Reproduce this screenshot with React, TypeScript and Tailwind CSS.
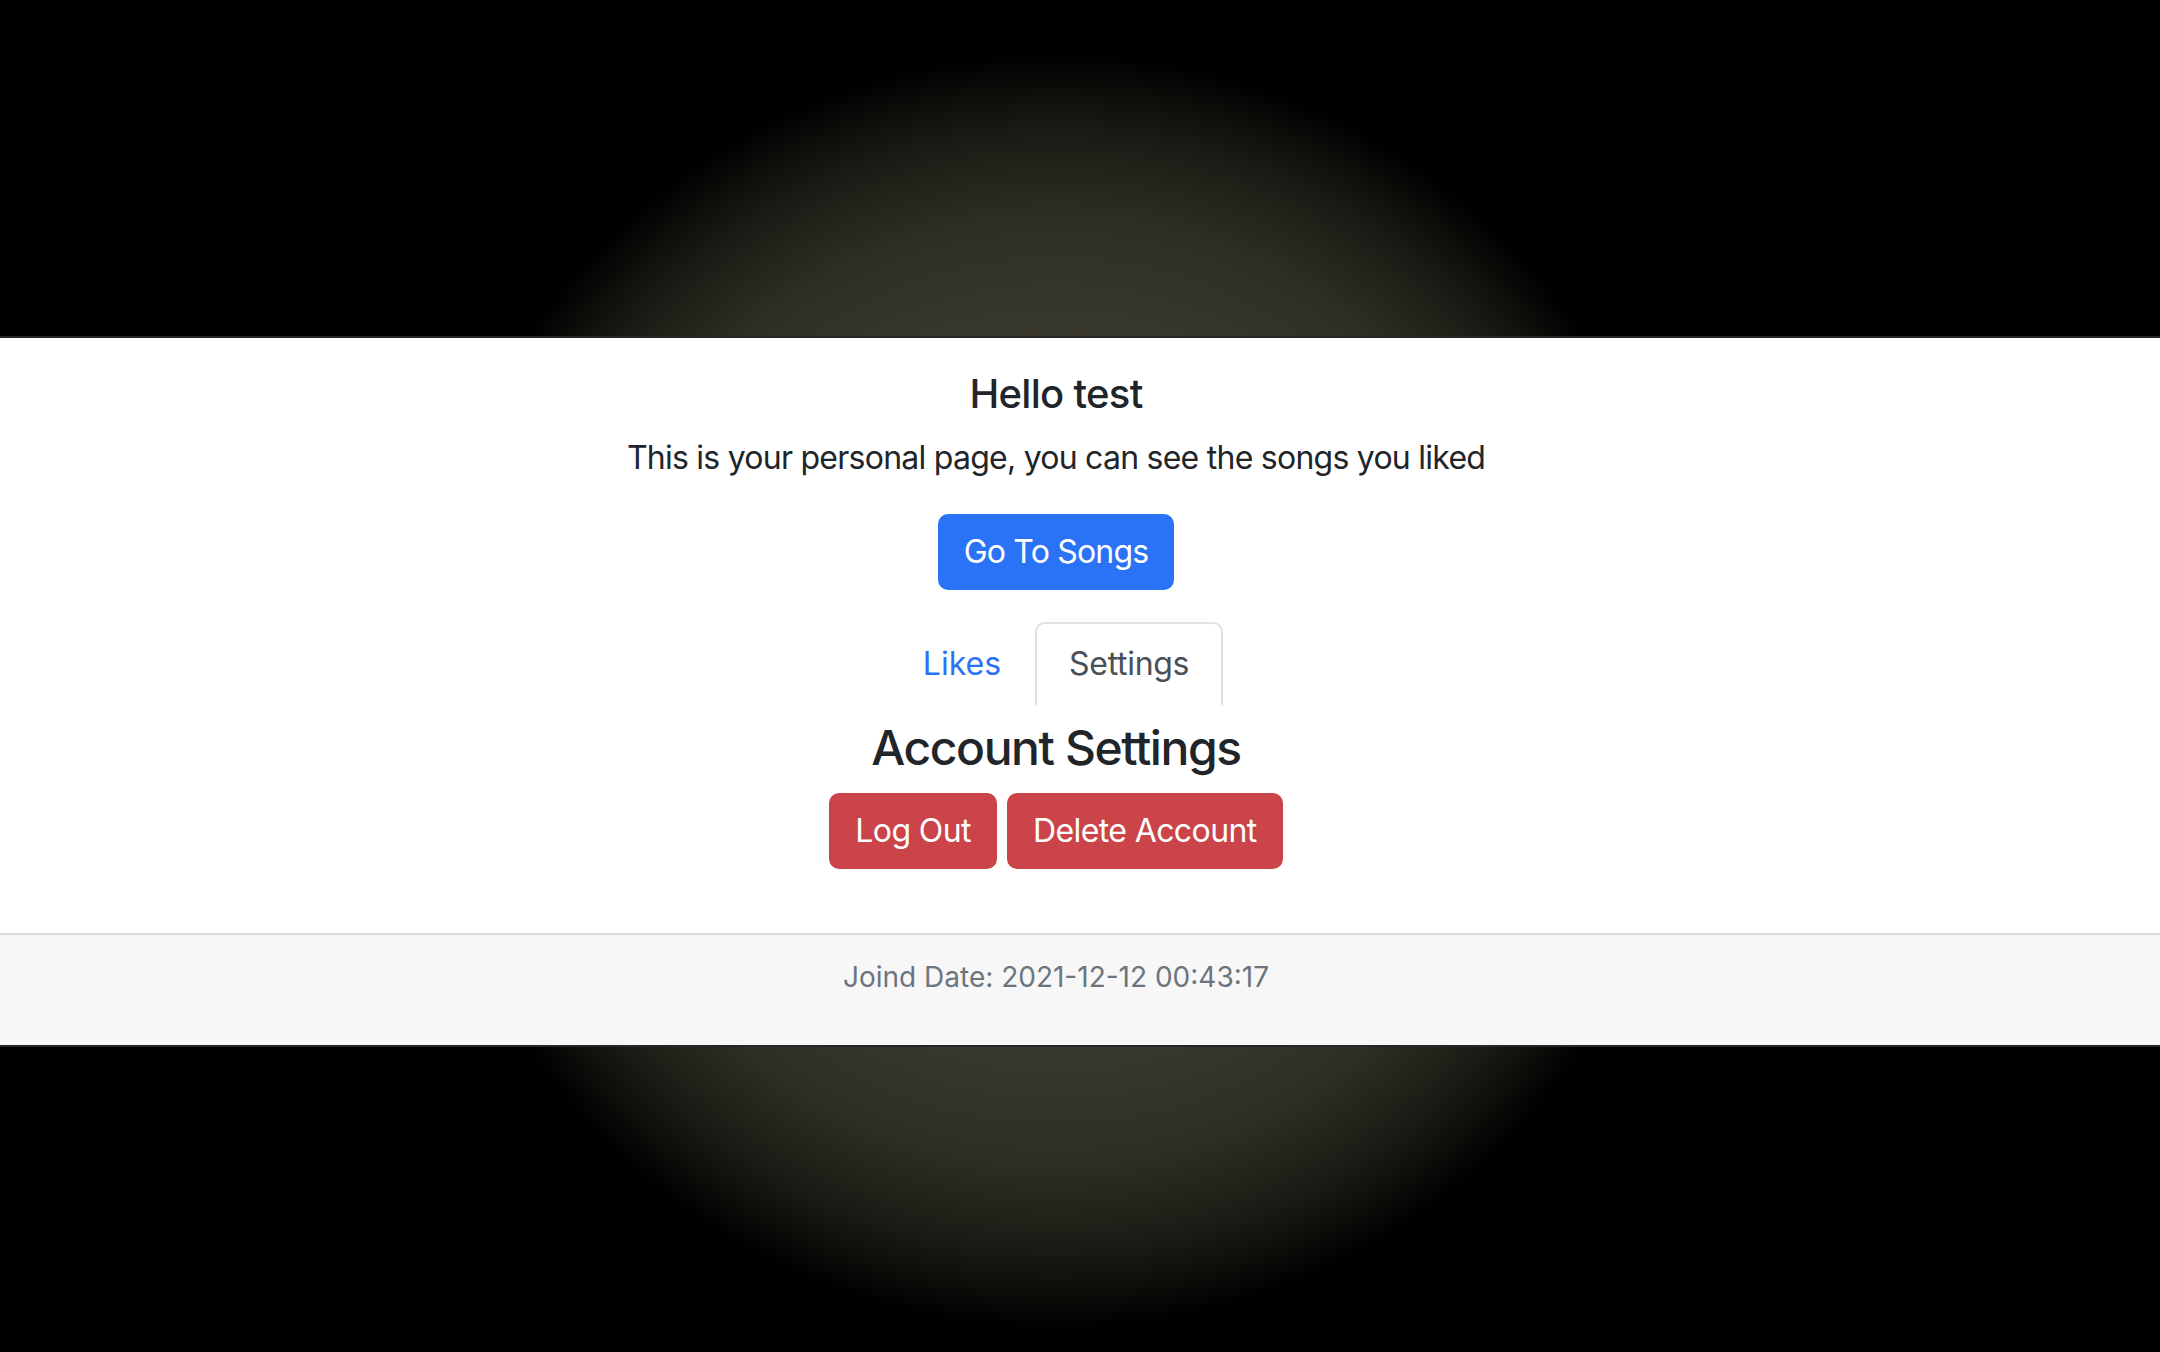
export default function App() {
  return (
    <main className="min-h-screen bg-black bg-[radial-gradient(circle_638px_at_1056px_691px,#3e3d30_0%,#3c3b2e_52%,#2f2e25_74%,#1a1a14_88%,#000_100%)] pt-[336px] font-['Inter','Noto_Sans',sans-serif] text-[#212529]">
      {/* Profile card */}
      <div className="border-y-2 border-[#23262a] bg-white">
        <div className="flex flex-col items-center pr-12 pt-8 pb-16 text-center">
          <h5 className="mb-4 text-[40px] leading-[48px] font-medium tracking-[-0.7px]">Hello test</h5>
          <p className="mb-8 text-[32px] leading-[48px] tracking-[-0.75px]">
            This is your personal page, you can see the songs you liked
          </p>
          <button className="rounded-[10px] border-2 border-[#2a72f6] bg-[#2a72f6] px-6 py-3 text-[32px] leading-[48px] tracking-[-0.8px] text-white">
            Go To Songs
          </button>

          {/* Tabs */}
          <ul className="mt-8 flex">
            <li>
              <a className="block border-2 border-transparent px-8 py-4 text-[32px] leading-[48px] text-[#2a72f6]">
                Likes
              </a>
            </li>
            <li>
              <a className="block rounded-t-[10px] border-2 border-b-white border-[#dee2e6] px-8 py-4 text-[32px] leading-[48px] tracking-[-0.3px] text-[#495057]">
                Settings
              </a>
            </li>
          </ul>

          {/* Tab content */}
          <h4 className="mt-[13px] mb-4 text-[48px] leading-[58px] font-medium tracking-[-1.4px]">Account Settings</h4>
          <div className="flex gap-[10px]">
            <button className="rounded-[10px] border-2 border-[#cb444a] bg-[#cb444a] px-6 py-3 text-[32px] leading-[48px] tracking-[-0.6px] text-white">
              Log Out
            </button>
            <button className="rounded-[10px] border-2 border-[#cb444a] bg-[#cb444a] px-6 py-3 text-[32px] leading-[48px] tracking-[-0.6px] text-white">
              Delete Account
            </button>
          </div>
        </div>

        <div className="h-[112px] border-t-2 border-[#d8d8d8] bg-[#f7f7f7] pr-12 pt-[21px] text-center">
          <p className="text-[28px] leading-[42px] text-[#6c757d]">Joind Date: 2021-12-12 00:43:17</p>
        </div>
      </div>
    </main>
  );
}
